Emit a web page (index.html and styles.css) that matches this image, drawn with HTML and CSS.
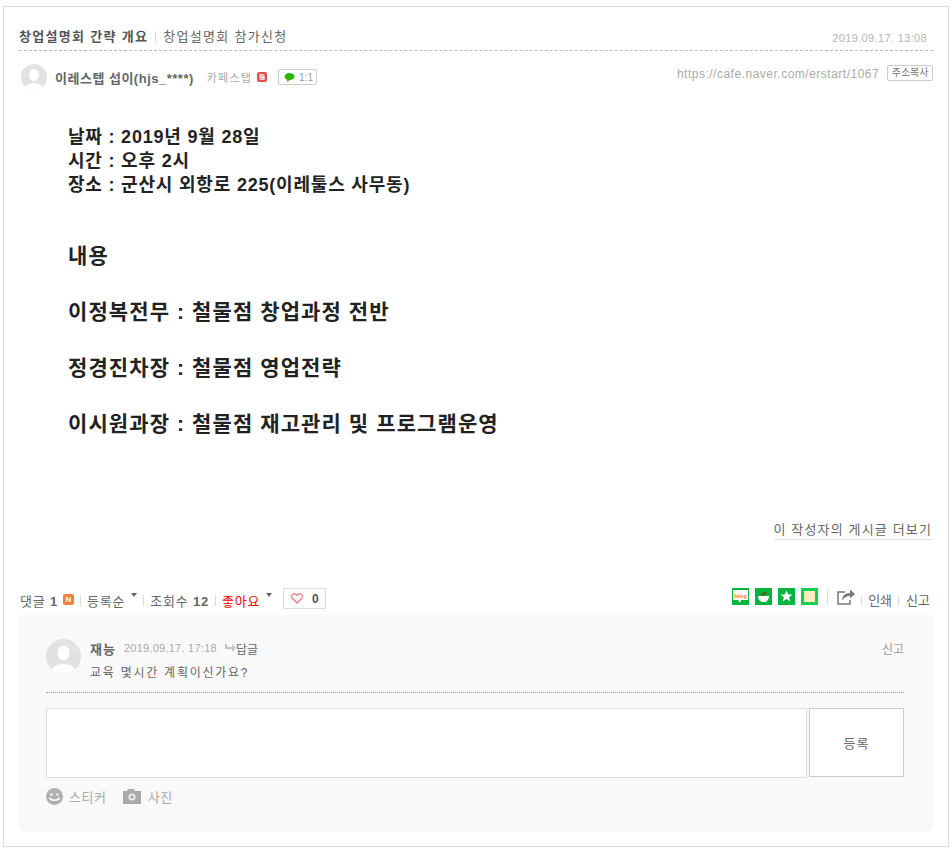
FILE: index.html
```html
<!DOCTYPE html>
<html lang="ko">
<head>
<meta charset="utf-8">
<title>창업설명회 간략 개요</title>
<link rel="stylesheet" href="styles.css">
</head>
<body>
<div class="frame">
  <header class="title-row">
    <div class="title"><strong>창업설명회 간략 개요</strong><span class="bar"></span><span class="board">창업설명회 참가신청</span></div>
    <span class="date">2019.09.17. 13:08</span>
  </header>
  <div class="author-row">
    <div class="author">
      <svg class="avatar" viewBox="0 0 26 26"><defs><clipPath id="c1"><circle cx="13" cy="13" r="13"/></clipPath></defs><circle cx="13" cy="13" r="13" fill="#e2e2e2"/><g clip-path="url(#c1)" fill="#fff"><ellipse cx="13" cy="11" rx="5" ry="6"/><path d="M3 26c1-5 5-7 10-7s9 2 10 7z"/></g></svg>
      <strong class="nick">이레스텝 섭이(hjs_****)</strong>
      <span class="grade">카페스탭</span>
      <svg class="staff" viewBox="0 0 10 10"><rect width="10" height="10" rx="2" fill="#e0504a"/><path d="M7.500 2.800H3v2.200h4v2.200H2.500" fill="none" stroke="#fff" stroke-width="1.300"/></svg>
      <span class="chat"><svg viewBox="0 0 12 10"><path d="M6 0c3 0 5.500 1.700 5.500 4s-2.500 4-5.500 4L3 10l.5-2.500C1.500 7 .5 5.700.5 4 .5 1.700 3 0 6 0z" fill="#2db400"/></svg>1:1</span>
    </div>
    <div class="url-box"><span class="url">https://cafe.naver.com/erstart/1067</span><span class="copy">주소복사</span></div>
  </div>
  <article class="content">
    <div class="info">
      <p>날짜 : 2019년 9월 28일</p>
      <p>시간 : 오후 2시</p>
      <p>장소 : 군산시 외항로 225(이레툴스 사무동)</p>
    </div>
    <div class="topics">
      <p>내용</p>
      <p>이정복전무 : 철물점 창업과정 전반</p>
      <p>정경진차장 : 철물점 영업전략</p>
      <p>이시원과장 : 철물점 재고관리 및 프로그램운영</p>
    </div>
  </article>
  <div class="more-row"><a class="more">이 작성자의 게시글 더보기</a></div>
  <div class="action-row">
    <div class="stats">
      <span class="stat">댓글 <b>1</b></span>
      <span class="new">N</span>
      <span class="bar short"></span>
      <span class="stat">등록순</span><span class="caret"></span>
      <span class="bar short"></span>
      <span class="stat">조회수 <b>12</b></span>
      <span class="bar short"></span>
      <span class="stat likes">좋아요</span><span class="caret"></span>
      <span class="heart-btn"><svg viewBox="0 0 12 11"><path d="M6 10 1.500 5.500C0 4 .5 1.500 2.500 1 4 .6 5.300 1.300 6 2.500 6.700 1.300 8 .6 9.500 1c2 .5 2.500 3 1 4.500z" fill="#fff" stroke="#ee6a6a" stroke-width="1.100"/></svg><b>0</b></span>
    </div>
    <div class="tools">
      <svg class="sns" viewBox="0 0 17 17"><rect width="17" height="17" fill="#00b43c"/><path d="M1 2h15v10H9l-1 3-2-3H1z" fill="#fff"/><text x="8.500" y="9.500" class="blog-t">blog</text></svg>
      <svg class="sns" viewBox="0 0 17 17"><rect width="17" height="17" fill="#00b43c"/><path d="M3 8h11c0 4-2.500 6-5.500 6S3 12 3 8z" fill="#fff"/><path d="M6 7.500c0-2 2.500-3.500 5.500-3.500-.5 2.500-3 3.500-5.500 3.500z" fill="#7a4a20"/></svg>
      <svg class="sns" viewBox="0 0 17 17"><rect width="17" height="17" fill="#00b43c"/><path d="m8.500 2.500 1.800 4h4.200l-3.400 2.700 1.300 4.300-3.900-2.500-3.900 2.500 1.300-4.300L2.500 6.500h4.200z" fill="#fff"/></svg>
      <svg class="sns" viewBox="0 0 17 17"><rect width="17" height="17" fill="#14d04e"/><rect x="3" y="3" width="11" height="11" fill="#f7efc0"/></svg>
      <span class="bar tall"></span>
      <svg class="share" viewBox="0 0 18 17"><path d="M8 4H1v12h12v-4" fill="none" stroke="#777" stroke-width="1.500"/><path d="M5 13c0-5 3-8 8-8V1.500L18 6l-5 4.500V8c-3.500 0-6.500 1.500-8 5z" fill="#777"/></svg>
      <span class="bar short"></span><span class="tool">인쇄</span><span class="bar short"></span><span class="tool last">신고</span>
    </div>
  </div>
  <section class="comments">
    <div class="comment">
      <svg class="c-avatar" viewBox="0 0 35 35"><defs><clipPath id="c2"><circle cx="17.500" cy="17.500" r="17.500"/></clipPath></defs><circle cx="17.500" cy="17.500" r="17.500" fill="#e2e2e2"/><g clip-path="url(#c2)" fill="#fff"><ellipse cx="17.500" cy="14" rx="6" ry="7.500"/><path d="M4 35c1-7 7-10 13.500-10S30 28 31 35z"/></g></svg>
      <div class="c-body">
        <div class="c-head">
          <strong>재능</strong><span class="c-date">2019.09.17. 17:18</span>
          <span class="reply"><svg viewBox="0 0 11 8"><path d="M0 0h2v3h5V0l4 4-4 4V5H0z" fill="#c4c4c4"/></svg>답글</span>
          <span class="c-report">신고</span>
        </div>
        <p class="c-text">교육 몇시간 계획이신가요?</p>
      </div>
    </div>
    <div class="write">
      <div class="input"></div>
      <div class="submit">등록</div>
    </div>
    <div class="attach">
      <svg viewBox="0 0 17 17"><circle cx="8.500" cy="8.500" r="8.500" fill="#b0b0b0"/><circle cx="5.500" cy="6.500" r="1.300" fill="#f0f0f0"/><circle cx="11.500" cy="6.500" r="1.300" fill="#f0f0f0"/><path d="M3.500 9.500c1 3.500 9 3.500 10 0" fill="none" stroke="#fff" stroke-width="1.500"/></svg>
      <span class="a-label">스티커</span>
      <svg class="cam" viewBox="0 0 18 15"><path d="M0 2h4l1-2h6l1 2h6v13H0z" fill="#aaa"/><circle cx="9" cy="8" r="3.500" fill="#f0f0f0"/><circle cx="9" cy="8" r="1.800" fill="#aaa"/></svg>
      <span class="a-label">사진</span>
    </div>
  </section>
</div>
</body>
</html>
```
FILE: styles.css
```css
* { box-sizing: border-box; }
html, body { margin: 0; padding: 0; background: #fff; }
body {
  font-family: "Liberation Sans", "Noto Sans CJK KR", sans-serif;
  font-size: 12px;
  color: #666;
}
p { margin: 0; }
.frame {
  width: 946px;
  height: 841px;
  margin: 6px 0 0 3px;
  border: 1px solid #ddd;
  padding: 0 15px;
}
.title-row {
  display: flex;
  justify-content: space-between;
  align-items: flex-end;
  height: 44px;
  padding-bottom: 5px;
  border-bottom: 1px dashed #bbb;
}
.title { display: flex; align-items: center; font-size: 13px; line-height: 16px; letter-spacing: 1.3px; }
.title strong { color: #555; font-weight: 700; }
.bar { display: inline-block; width: 1px; height: 12px; background: #ddd; margin: 0 7px 0 7px; }
.bar.short { margin: 3px 6px 0; height: 11px; }
.bar.tall { height: 16px; margin: 0 9px; }
.board { color: #666; }
.date { font-size: 11px; color: #b5b5b5; margin-right: 6px; letter-spacing: 0.35px; line-height: 14px; }
.author-row { display: flex; justify-content: space-between; height: 47px; align-items: flex-start; padding-top: 13px; }
.author { display: flex; align-items: center; padding-left: 2px; }
.avatar { width: 26px; height: 26px; margin-right: 8px; }
.nick { font-size: 13px; color: #666; margin-right: 13px; letter-spacing: 0.5px; }
.grade { font-size: 11px; color: #aaa; margin-right: 5px; letter-spacing: 1.2px; }
.staff { width: 10px; height: 10px; margin-right: 11px; }
.chat { display: flex; align-items: center; height: 16px; width: 39px; padding-left: 5px; border: 1px solid #ccc; border-radius: 2px; font-size: 10px; color: #999; gap: 4px; }
.chat svg { width: 11px; height: 9px; }
.url-box { display: flex; align-items: center; }
.url { font-size: 12px; color: #aaa; letter-spacing: 0.5px; margin-right: 8px; margin-top: 3px; }
.copy { font-size: 10px; color: #777; border: 1px solid #ccc; border-radius: 2px; height: 16px; line-height: 13px; padding: 0 3.500px; }
.content {
  padding: 27px 0 0 49px;
  height: 423px;
  color: #222;
  font-weight: 700;
}
.info { font-size: 18px; line-height: 24px; letter-spacing: 0.8px; }
.topics { margin-top: 31px; font-size: 21px; line-height: 56px; letter-spacing: 1.1px; }
.topics p { height: 56px; }
.more-row { display: flex; justify-content: flex-end; height: 22px; padding-right: 1px; }
.more { font-size: 13px; letter-spacing: 1.150px; color: #666; border-bottom: 1px solid #ddd; height: 19px; line-height: 17px; }
.action-row { display: flex; justify-content: space-between; align-items: flex-end; height: 72px; padding: 0 3px 6px 1px; }
.stats, .tools { display: flex; align-items: center; height: 21px; font-size: 13px; }
.stat { margin-top: 3px; letter-spacing: 0.8px; }
.stat b { font-weight: 700; }
.new { width: 11px; height: 11px; margin: 2px 0 0 5px; border-radius: 2px; background: #f4813a; color: #fff; font-size: 8px; line-height: 11px; text-align: center; font-weight: 700; }
.caret { width: 0; height: 0; border: 3px solid transparent; border-top: 4px solid #666; border-bottom: 0; margin: -7px 0 0 6px; }
.likes { color: #f00; }
.heart-btn { display: flex; align-items: center; justify-content: center; gap: 9px; width: 43px; height: 21px; border: 1px solid #ddd; margin-left: 11px; }
.heart-btn svg { width: 12px; height: 11px; }
.heart-btn b { font-size: 12px; color: #555; }
.tools { color: #666; align-items: flex-start; }
.tools > .bar { margin-top: 7px; }
.tools > .bar.tall { margin-top: 1px; }
.tool { margin-top: 2px; }
.tool.last { margin-left: 1px; }
.sns { width: 17px; height: 17px; margin-left: 6px; }
.blog-t { font: 700 6px "Liberation Sans", sans-serif; fill: #f5822a; text-anchor: middle; }
.share { width: 18px; height: 17px; }
.comments { background: #f9f9f9; height: 216px; padding: 24px 29px 0 27px; }
.comment { display: flex; height: 53px; border-bottom: 1px dotted #999; box-sizing: content-box; }
.c-avatar { width: 35px; height: 35px; margin-right: 9px; flex: none; }
.c-body { flex: 1; }
.c-head { display: flex; align-items: center; height: 18px; }
.c-head strong { color: #666; margin-right: 8px; font-size: 13px; letter-spacing: 1px; }
.c-date { font-size: 11px; color: #aaa; margin-right: 8px; letter-spacing: 0.25px; }
.reply { display: flex; align-items: center; color: #666; }
.reply svg { width: 11px; height: 8px; }
.c-report { margin-left: auto; color: #999; }
.c-text { margin-top: 8px; color: #666; letter-spacing: 1.750px; line-height: 16px; }
.write { display: flex; gap: 2px; margin-top: 15px; align-items: flex-start; }
.input { width: 761px; height: 70px; background: #fff; border: 1px solid #ddd; }
.submit { width: 95px; height: 69px; background: #fff; border: 1px solid #ccc; text-align: center; line-height: 69px; color: #666; font-size: 13px; letter-spacing: 1px; }
.attach { display: flex; align-items: center; margin-top: 9px; color: #aaa; }
.attach svg { width: 17px; height: 17px; margin-right: 6px; }
.attach .cam { width: 18px; height: 15px; margin-right: 7px; }
.a-label { font-size: 13px; margin-right: 16px; letter-spacing: 0.6px; }
```
